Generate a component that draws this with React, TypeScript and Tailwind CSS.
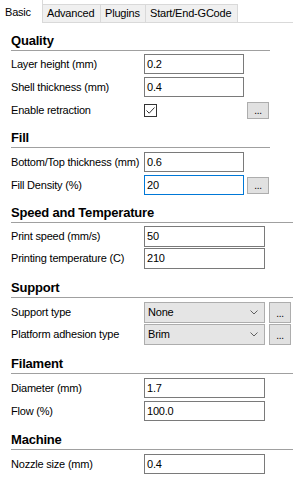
import React from "react";

const Heading: React.FC<{ title: string; wide?: boolean; className?: string }> = ({
  title,
  wide,
  className = "",
}) => (
  <div
    className={`ml-[11px] h-[18px] border-b border-[#a0a0a0] text-[13px] leading-[16px] font-bold text-black ${
      wide ? "w-[282px]" : "w-[259px]"
    } ${className}`}
  >
    {title}
  </div>
);

const Dots: React.FC<{ tall?: boolean }> = ({ tall }) => (
  <button
    className={`w-[22px] border border-[#adadad] bg-[#e1e1e1] text-[10px] leading-none flex items-start justify-center pt-[3px] text-black ${
      tall ? "h-[21px] pt-[6px]" : "h-[17px]"
    }`}
  >
    ...
  </button>
);

const Field: React.FC<{ value: string; wide?: boolean; tall?: boolean; focus?: boolean }> = ({
  value,
  wide,
  tall,
  focus,
}) => (
  <div
    className={`border bg-white pl-[2px] flex items-center ${wide ? "w-[121px]" : "w-[100px]"} ${
      tall ? "h-[21px]" : "h-[20px]"
    } ${focus ? "border-[#0078d7]" : "border-[#7a7a7a]"}`}
  >
    {value}
  </div>
);

const Combo: React.FC<{ value: string }> = ({ value }) => (
  <div className="w-[121px] h-[21px] border border-[#adadad] bg-[#e5e5e5] pl-[3px] pr-[6px] flex items-center justify-between">
    <span>{value}</span>
    <svg width="8" height="5" viewBox="0 0 8 5" fill="none">
      <path d="M0.5 0.5 L4 4 L7.5 0.5" stroke="#606060" strokeWidth="1" />
    </svg>
  </div>
);

const Row: React.FC<{ label: string; tall?: boolean; className?: string; children: React.ReactNode }> = ({
  label,
  tall,
  className = "",
  children,
}) => (
  <div className={`flex items-center pl-[11px] ${tall ? "h-[21px]" : "h-[20px]"} ${className}`}>
    <span className="w-[133px] whitespace-nowrap">{label}</span>
    {children}
  </div>
);

export default function App() {
  return (
    <div className="w-[293px] h-[494px] bg-white overflow-hidden text-[11px] tracking-[-0.2px] text-black font-['Liberation_Sans',Arial,sans-serif]">
      {/* tabs */}
      <div className="flex h-[23px]">
        <div className="w-[43px] h-[23px] bg-white border-r border-[#d9d9d9] pl-[5px] pt-[4px]">Basic</div>
        <div className="w-[58px] h-[19px] mt-[4px] bg-[#f0f0f0] border-y border-r border-[#d9d9d9] pl-[4px] leading-[17px]">
          Advanced
        </div>
        <div className="w-[45px] h-[19px] mt-[4px] bg-[#f0f0f0] border-y border-r border-[#d9d9d9] pl-[4px] leading-[17px]">
          Plugins
        </div>
        <div className="w-[92px] h-[19px] mt-[4px] bg-[#f0f0f0] border-y border-r border-[#d9d9d9] pl-[4px] leading-[17px]">
          Start/End-GCode
        </div>
        <div className="flex-1 border-b border-[#d9d9d9]" />
      </div>

      <Heading title="Quality" className="mt-[10px]" />
      <div className="mt-[3px] flex flex-col gap-[3px]">
        <Row label="Layer height (mm)">
          <Field value="0.2" />
        </Row>
        <Row label="Shell thickness (mm)">
          <Field value="0.4" />
        </Row>
        <Row label="Enable retraction">
          <div className="w-[13px] h-[13px] border border-[#333333] bg-white flex items-center justify-center">
            <svg width="11" height="11" viewBox="0 0 11 11" fill="none">
              <path d="M1.5 5.5 L4.2 8.2 L9.5 2.5" stroke="#333333" strokeWidth="1" />
            </svg>
          </div>
          <div className="ml-[90px]">
            <Dots />
          </div>
        </Row>
      </div>

      <Heading title="Fill" className="mt-[10px]" />
      <div className="mt-[4px] flex flex-col gap-[3px]">
        <Row label="Bottom/Top thickness (mm)">
          <Field value="0.6" />
        </Row>
        <Row label="Fill Density (%)">
          <Field value="20" focus />
          <div className="ml-[3px]">
            <Dots />
          </div>
        </Row>
      </div>

      <Heading title="Speed and Temperature" wide className="mt-[10px]" />
      <div className="mt-[3px] flex flex-col gap-[1px]">
        <Row label="Print speed (mm/s)" tall>
          <Field value="50" wide tall />
        </Row>
        <Row label="Printing temperature (C)" tall>
          <Field value="210" wide tall />
        </Row>
      </div>

      <Heading title="Support" wide className="mt-[11px]" />
      <div className="mt-[4px] flex flex-col gap-[1px]">
        <Row label="Support type" tall>
          <Combo value="None" />
          <div className="ml-[4px]">
            <Dots tall />
          </div>
        </Row>
        <Row label="Platform adhesion type" tall>
          <Combo value="Brim" />
          <div className="ml-[4px]">
            <Dots tall />
          </div>
        </Row>
      </div>

      <Heading title="Filament" wide className="mt-[11px]" />
      <div className="mt-[4px] flex flex-col gap-[3px]">
        <Row label="Diameter (mm)">
          <Field value="1.7" wide />
        </Row>
        <Row label="Flow (%)">
          <Field value="100.0" wide />
        </Row>
      </div>

      <Heading title="Machine" wide className="mt-[11px]" />
      <div className="mt-[4px] flex flex-col gap-[3px]">
        <Row label="Nozzle size (mm)">
          <Field value="0.4" wide />
        </Row>
      </div>
    </div>
  );
}
